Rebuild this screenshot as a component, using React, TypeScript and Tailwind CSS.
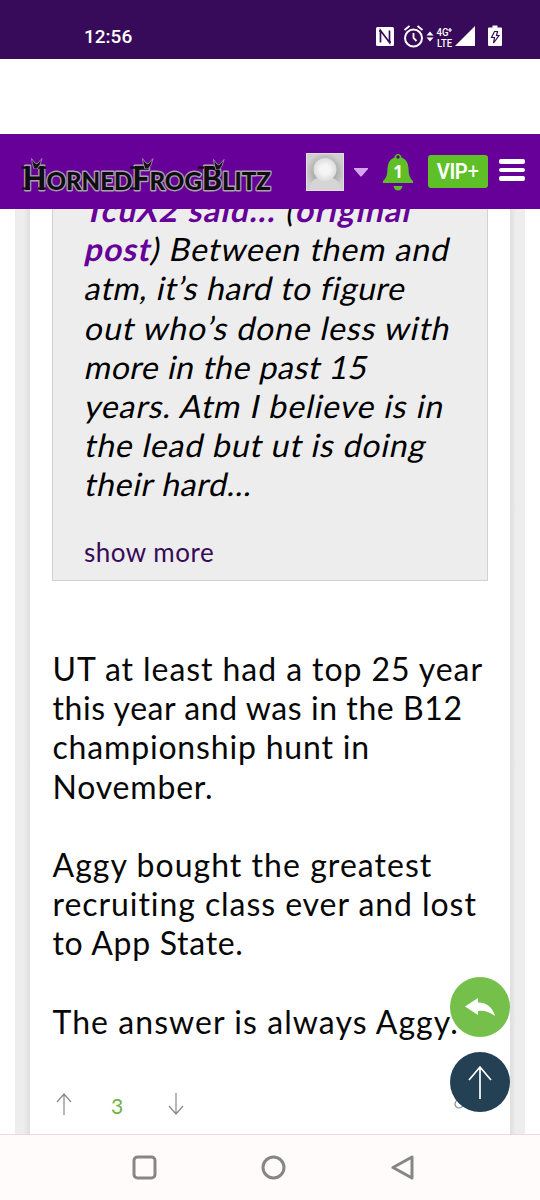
import React from 'react';

function StatusBar() {
  return (
    <header className="flex h-[59px] shrink-0 items-start justify-between bg-[#370b59] pl-[84px] pr-[36px] pt-[24px] font-['Roboto',sans-serif] text-white">
      <span className="mt-[2px] text-[19px] leading-[22px] font-medium">12:56</span>
      <svg className="h-[26px] w-[130px]" viewBox="0 0 130 26" fill="none">
        <rect x="2" y="3" width="18" height="19" rx="1.5" fill="#fff" />
        <path d="M6.500 18.500V6.500l9 12V6.500M5 7h2.500M14.500 18h2.500" stroke="#370b59" strokeWidth="1.700" />
        <circle cx="39.500" cy="14" r="8.500" stroke="#fff" strokeWidth="2" />
        <path d="M39.500 9v5l3 3M30.500 6l5-4M48.500 6l-5-4" stroke="#fff" strokeWidth="1.800" />
        <path d="M52.500 11.500h7L56 7.500zM52.500 13.500h7L56 17.500z" fill="#fff" />
        <text x="62.500" y="11.500" fontSize="11" fontWeight="500" fill="#fff" textLength="12" lengthAdjust="spacingAndGlyphs">4G</text>
        <path d="M76 4v4M74 6h4" stroke="#fff" strokeWidth="1.200" />
        <text x="63" y="23" fontSize="11" fontWeight="500" fill="#fff" textLength="15" lengthAdjust="spacingAndGlyphs">LTE</text>
        <path d="M81 22L101 2v20z" fill="#fff" />
        <path d="M118.500 1.500h5v2h3.500q1 0 1 1V21q0 1-1 1h-12q-1 0-1-1V4.500q0-1 1-1h3.500z" fill="#fff" />
        <path d="M120.500 7.500h3l-1 4h2.500l-5.500 7.500 1-5.500h-3z" stroke="#370b59" strokeWidth="1.200" />
      </svg>
    </header>
  );
}

function Flame({ className }: { className: string }) {
  return (
    <svg className={className} viewBox="0 0 12 12" fill="none">
      <path d="M3 12Q1 7 0.500 1.500L4 6l2 1 5-5.500L9 8l-3 4z" fill="#171217" stroke="#ad9ab8" strokeWidth="0.800" />
    </svg>
  );
}

function Logo() {
  return (
    <div className="relative h-[40px] w-[254px]">
      <svg className="h-[40px] w-[254px]" viewBox="0 0 254 40">
        <text x="3" y="34.500" textLength="248" lengthAdjust="spacingAndGlyphs" fontSize="25.500" fontFamily="Lato, sans-serif" fontWeight="900" fill="#100d12" stroke="#aaa0ae" strokeWidth="2.800" strokeLinejoin="round" style={{ paintOrder: 'stroke' }}>
          <tspan fontSize="32">H</tspan>ORNED<tspan fontSize="32">F</tspan>ROG<tspan fontSize="32">B</tspan>LITZ
        </text>
        <path d="M1.500 12.700h7M18 12.700h8M2 33.500h8M18 33.500h8M110 12.700h6M110 33.500h9M178 12.700h6" stroke="#100d12" strokeWidth="2.200" />
      </svg>
      <Flame className="absolute left-[11px] top-[2px] h-[12px] w-[12px]" />
      <Flame className="absolute left-[122px] top-[2px] h-[12px] w-[12px]" />
      <Flame className="absolute left-[193px] top-[3px] h-[12px] w-[12px]" />
    </div>
  );
}

function NavBar() {
  return (
    <nav className="z-10 flex h-[75px] shrink-0 items-start bg-[#660099] pl-[20px] pt-[19px]">
      <div className="mt-[2px]"><Logo /></div>
      <svg className="ml-[32px] h-[38px] w-[38px]" viewBox="0 0 38 38">
        <defs>
          <radialGradient id="bg"><stop offset=".35" stopColor="#999" /><stop offset="1" stopColor="#cfcfcf" /></radialGradient>
          <radialGradient id="head"><stop offset=".4" stopColor="#f5f5f5" /><stop offset="1" stopColor="#dcdcdc" /></radialGradient>
        </defs>
        <path d="M0 0h38v38H0z" fill="url(#bg)" />
        <path d="M3 38q1-12 11-14h10q10 2 11 14z" fill="#d5d5d5" />
        <circle cx="19" cy="16.500" r="11.500" fill="url(#head)" />
        <path d="M.5.5h37v37H.5z" fill="none" stroke="#dedede" />
      </svg>
      <svg className="ml-[10px] mt-[15px] h-[9px] w-[14px]" viewBox="0 0 14 9"><path d="M0 0h14v1L7.500 8.500h-1L0 1z" fill="#d5a6ee" /></svg>
      <div className="relative ml-[14px] mt-[1px] h-[37px] w-[32px]">
        <svg className="h-[37px] w-[32px]" viewBox="0 0 32 37">
          <path d="M11.500 32h9q-1 4.500-4.500 4.500T11.500 32z" fill="#5ebf26" />
          <path d="M16 0q3 0 3.500 3.500Q26 5.500 26.500 14q0 10 4.500 13v2H1v-2q4.500-3 4.500-13Q6 5.500 12.500 3.500 13 0 16 0z" fill="#5ebf26" />
          <circle cx="16" cy="3" r="1.700" fill="#441060" />
        </svg>
        <span className="absolute inset-x-0 top-[8px] text-center font-['Open_Sans',sans-serif] text-[17px] leading-[20px] font-bold text-white">1</span>
      </div>
      <div className="ml-[14px] mt-[2px] flex h-[33px] w-[60px] items-center justify-center rounded-[3px] bg-[#5ebf26] font-['Roboto',sans-serif] text-[22px] font-semibold tracking-[-0.5px] text-white">
        <span className="flex scale-x-92 items-center">VIP<span className="font-normal">+</span></span>
      </div>
      <div className="ml-[11px] mt-[6px] flex w-[26px] flex-col gap-[4px]">
        <i className="h-[5px] rounded-[2px] bg-white" />
        <i className="h-[4px] rounded-[2px] bg-white" />
        <i className="h-[5px] rounded-[2px] bg-white" />
      </div>
    </nav>
  );
}

function ArrowUp({ className }: { className: string }) {
  return (
    <svg className={className} viewBox="0 0 16 22" fill="none" stroke="currentColor" strokeWidth="1.200">
      <path d="M8 22V1M1 9l7-8 7 8" />
    </svg>
  );
}

function Quote() {
  return (
    <blockquote className="mx-[22px] -mt-[20px] flex h-[392px] shrink-0 flex-col border border-[#d2d2d2] bg-[#ededed] pl-[31px] text-[32px] leading-[39.2px] text-black">
      <p className="pl-[2px] whitespace-nowrap">
        <span className="block -skew-x-12 tracking-[1.25px]"><b className="text-[#660099]">TcuX2 said...</b> (<b className="text-[#660099]">original</b></span>
        <span className="block -skew-x-12 tracking-[0.9px]"><b className="text-[#660099]">post</b>) Between them and</span>
        <span className="block -skew-x-12 tracking-[0.6px]">atm, it’s hard to figure</span>
        <span className="block -skew-x-12 tracking-[0.87px]">out who’s done less with</span>
        <span className="block -skew-x-12 tracking-[0.5px]">more in the past 15</span>
        <span className="block -skew-x-12 tracking-[0.9px]">years. Atm I believe is in</span>
        <span className="block -skew-x-12 tracking-[0.8px]">the lead but ut is doing</span>
        <span className="block -skew-x-12 tracking-[0.7px]">their hard...</span>
      </p>
      <a className="mt-[30px] text-[26px] leading-[36px] tracking-[0.5px] text-[#370b59]">show more</a>
    </blockquote>
  );
}

function Post() {
  return (
    <div className="mt-[68px] pl-[22.5px] text-[32px] leading-[39.2px] whitespace-nowrap text-[#080808]">
      <p>
        <span className="block tracking-[0.93px]">UT at least had a top 25 year</span>
        <span className="block tracking-[0.56px]">this year and was in the B12</span>
        <span className="block tracking-[0.82px]">championship hunt in</span>
        <span className="block tracking-[0.8px]">November.</span>
      </p>
      <p className="mt-[39.2px]">
        <span className="block tracking-[1.04px]">Aggy bought the greatest</span>
        <span className="block tracking-[0.93px]">recruiting class ever and lost</span>
        <span className="block tracking-[0.7px]">to App State.</span>
      </p>
      <p className="mt-[39.2px] tracking-[1.06px]">The answer is always Aggy.</p>
    </div>
  );
}

export default function App() {
  return (
    <div className="relative flex h-[1200px] w-[540px] flex-col overflow-hidden bg-white font-['Lato',sans-serif]">
      <StatusBar />
      <div className="h-[75px] shrink-0 bg-white" />
      <NavBar />
      <main className="flex min-h-0 flex-1 overflow-hidden px-[15px]">
        <div className="w-[15px] bg-linear-to-r from-[#ededed] from-60% to-[#dedede]" />
        <article className="flex w-[480px] flex-col bg-white">
          <Quote />
          <Post />
          <div className="mt-[52px] flex items-start pl-[26px] text-[#888]">
            <ArrowUp className="h-[22px] w-[16px]" />
            <span className="ml-[39px] mt-[1px] w-[12px] text-[21px] leading-[24px] text-[#6db33f]">3</span>
            <ArrowUp className="ml-[45px] h-[22px] w-[16px] rotate-180" />
            <svg className="ml-[270px] mt-[6px] h-[10px] w-[10px]" viewBox="0 0 10 10" fill="none" stroke="#888" strokeWidth="1.200"><circle cx="5" cy="5" r="4" /></svg>
          </div>
        </article>
        <div className="w-[15px] bg-linear-to-l from-[#ededed] from-60% to-[#dedede]" />
      </main>
      <button className="absolute left-[450px] top-[977px] flex size-[60px] items-center justify-center rounded-full bg-[#75c04b]">
        <svg className="h-[20px] w-[30px]" viewBox="0 0 30 20"><path d="M0 9.500L13 1v4.500q13 0 17 13.500-8-6-17-5v4z" fill="#fff" /></svg>
      </button>
      <button className="absolute left-[450px] top-[1052px] flex size-[60px] items-center justify-center rounded-full bg-[#234055] text-white">
        <svg className="h-[34px] w-[24px]" viewBox="0 0 24 34" fill="none" stroke="currentColor" strokeWidth="1.700"><path d="M12 34V2M1 15L12 2l11 13" /></svg>
      </button>
      <footer className="flex h-[66px] shrink-0 items-start border-t border-[#f2d9d7] bg-[#fffbfa] pl-[132px] pt-[20px]">
        <svg className="h-[25px] w-[25px]" viewBox="0 0 25 25" fill="none" stroke="#868686" strokeWidth="3"><rect x="2" y="2" width="21" height="21" rx="3.500" /></svg>
        <svg className="ml-[104px] h-[25px] w-[25px]" viewBox="0 0 25 25" fill="none" stroke="#868686" strokeWidth="3"><circle cx="12.500" cy="12.500" r="10.500" /></svg>
        <svg className="ml-[105px] h-[25px] w-[23px]" viewBox="0 0 23 25" fill="none" stroke="#868686" strokeWidth="3" strokeLinejoin="round"><path d="M2 12.500L21 2v21z" /></svg>
      </footer>
    </div>
  );
}
